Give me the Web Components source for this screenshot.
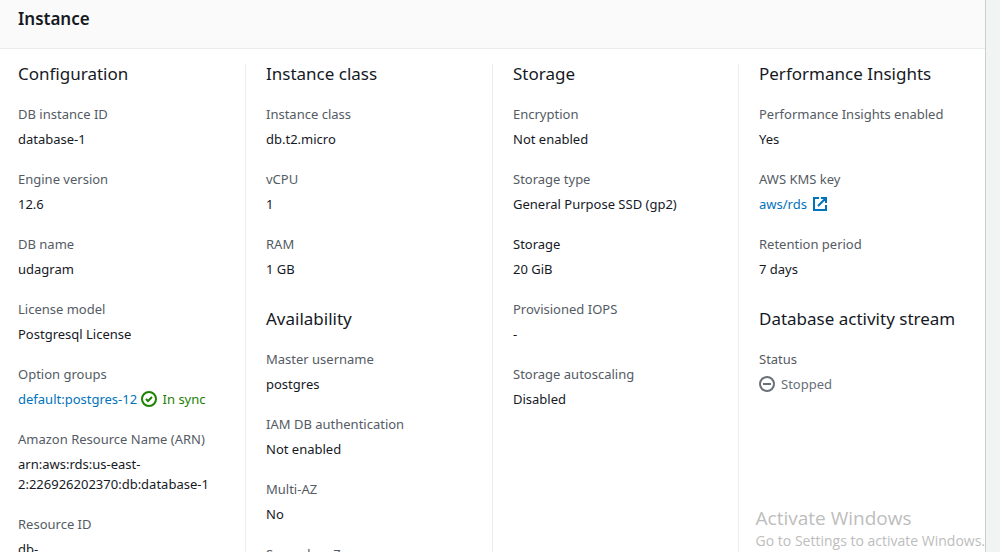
<!DOCTYPE html>
<html lang="en">
<head>
<meta charset="utf-8">
<meta name="viewport" content="width=device-width, initial-scale=1">
<title>Instance</title>
<style>
  html, body { margin: 0; height: 100%; overflow: hidden; }
  body { background: #f2f3f3; color: #16191f; font: 13px/20px "Noto Sans", "Open Sans", sans-serif; }
</style>
</head>
<body>
<instance-panel>
  <span slot="title">Instance</span>
  <detail-column>
    <detail-group heading="Configuration">
      <detail-item label="DB instance ID">database-1</detail-item>
      <detail-item label="Engine version">12.6</detail-item>
      <detail-item label="DB name">udagram</detail-item>
      <detail-item label="License model">Postgresql License</detail-item>
      <detail-item label="Option groups"><text-link>default:postgres-12</text-link> <status-badge kind="success">In sync</status-badge></detail-item>
      <detail-item label="Amazon Resource Name (ARN)">arn:aws:rds:us-east-<wbr>2:226926202370:db:database-1</detail-item>
      <detail-item label="Resource ID">db-</detail-item>
    </detail-group>
  </detail-column>
  <detail-column divided>
    <detail-group heading="Instance class">
      <detail-item label="Instance class">db.t2.micro</detail-item>
      <detail-item label="vCPU">1</detail-item>
      <detail-item label="RAM">1 GB</detail-item>
    </detail-group>
    <detail-group heading="Availability">
      <detail-item label="Master username">postgres</detail-item>
      <detail-item label="IAM DB authentication">Not enabled</detail-item>
      <detail-item label="Multi-AZ">No</detail-item>
      <detail-item label="Secondary Zone"></detail-item>
    </detail-group>
  </detail-column>
  <detail-column divided>
    <detail-group heading="Storage">
      <detail-item label="Encryption">Not enabled</detail-item>
      <detail-item label="Storage type">General Purpose SSD (gp2)</detail-item>
      <detail-item label="Storage" strong>20 GiB</detail-item>
      <detail-item label="Provisioned IOPS">-</detail-item>
      <detail-item label="Storage autoscaling">Disabled</detail-item>
    </detail-group>
  </detail-column>
  <detail-column divided>
    <detail-group heading="Performance Insights">
      <detail-item label="Performance Insights enabled">Yes</detail-item>
      <detail-item label="AWS KMS key"><text-link external>aws/rds</text-link></detail-item>
      <detail-item label="Retention period">7 days</detail-item>
    </detail-group>
    <detail-group heading="Database activity stream">
      <detail-item label="Status"><status-badge kind="stopped">Stopped</status-badge></detail-item>
    </detail-group>
  </detail-column>
  <activation-notice slot="overlay"></activation-notice>
</instance-panel>

<script>
class ShadowElement extends HTMLElement {
  connectedCallback() {
    if (!this.shadowRoot) this.attachShadow({ mode: 'open' }).innerHTML = this.render();
  }
}

customElements.define('instance-panel', class extends ShadowElement {
  render() {
    return `<style>
      :host { display: block; position: relative; height: 100%; box-sizing: border-box; overflow: hidden;
              margin-right: 14px; background: #fff; border-right: 1px solid #c9cdce; }
      header { padding: 8px 18px 18px; background: #fafafa; border-bottom: 1px solid #eaeded; }
      h2 { margin: 0; font-size: 17px; line-height: 22px; font-weight: 600; }
      .columns { display: grid; grid-template-columns: 245fr 247fr 246fr 247fr; padding: 15px 0; }
    </style>
    <header><h2><slot name="title"></slot></h2></header>
    <div class="columns"><slot></slot></div>
    <slot name="overlay"></slot>`;
  }
});

customElements.define('detail-column', class extends ShadowElement {
  render() {
    return `<style>
      :host { display: flex; flex-direction: column; gap: 30px; min-width: 0; padding: 0 8px 0 18px; }
      :host([divided]) { padding-left: 20px; border-left: 1px solid #eaeded; }
    </style><slot></slot>`;
  }
});

customElements.define('detail-group', class extends ShadowElement {
  render() {
    return `<style>
      :host { display: flex; flex-direction: column; gap: 20px; }
      h3 { margin: 0; font-size: 17px; line-height: 20px; font-weight: 400; white-space: nowrap; }
    </style><h3>${this.getAttribute('heading')}</h3><slot></slot>`;
  }
});

customElements.define('detail-item', class extends ShadowElement {
  render() {
    return `<style>
      :host { display: block; }
      dl, dd { margin: 0; }
      dl { display: grid; gap: 5px; }
      dt { color: #545b64; }
      :host([strong]) dt { color: inherit; }
    </style><dl><dt>${this.getAttribute('label')}</dt><dd><slot></slot></dd></dl>`;
  }
});

customElements.define('text-link', class extends ShadowElement {
  render() {
    const icon = this.hasAttribute('external')
      ? `<svg viewBox="0 0 16 16" width="16" height="16" aria-hidden="true" fill="none" stroke="currentColor" stroke-width="2">
           <path d="M7 2H2v12h12V9M9 2h5v5M14 2 6 10"/></svg>` : '';
    return `<style>
      :host { display: inline-block; }
      a { display: inline-flex; align-items: center; gap: 5px; color: #0073bb; text-decoration: none; }
      a:hover { text-decoration: underline; }
      svg { flex: none; }
    </style><a href="#"><slot></slot>${icon}</a>`;
  }
});

customElements.define('status-badge', class extends ShadowElement {
  render() {
    const mark = this.getAttribute('kind') === 'success' ? 'M5 8l2 2 4-4' : 'M4 8h8';
    return `<style>
      :host { display: inline-flex; align-items: center; gap: 6px; vertical-align: top; color: #687078; }
      :host([kind="success"]) { color: #1d8102; }
      svg { flex: none; }
    </style>
    <svg viewBox="0 0 16 16" width="16" height="16" aria-hidden="true" fill="none" stroke="currentColor" stroke-width="2">
      <circle cx="8" cy="8" r="7"/><path d="${mark}"/></svg><span><slot></slot></span>`;
  }
});

customElements.define('activation-notice', class extends ShadowElement {
  render() {
    return `<style>
      :host { position: absolute; right: 0; bottom: 0; color: #bdbdbd; white-space: nowrap; pointer-events: none;
              font-family: "Open Sans", "Noto Sans", sans-serif; }
      p { margin: 0; }
      .title { font-size: 19px; line-height: 24px; }
      .hint { font-size: 14px; line-height: 22px; }
    </style><p class="title">Activate Windows</p><p class="hint">Go to Settings to activate Windows.</p>`;
  }
});
</script>
</body>
</html>
